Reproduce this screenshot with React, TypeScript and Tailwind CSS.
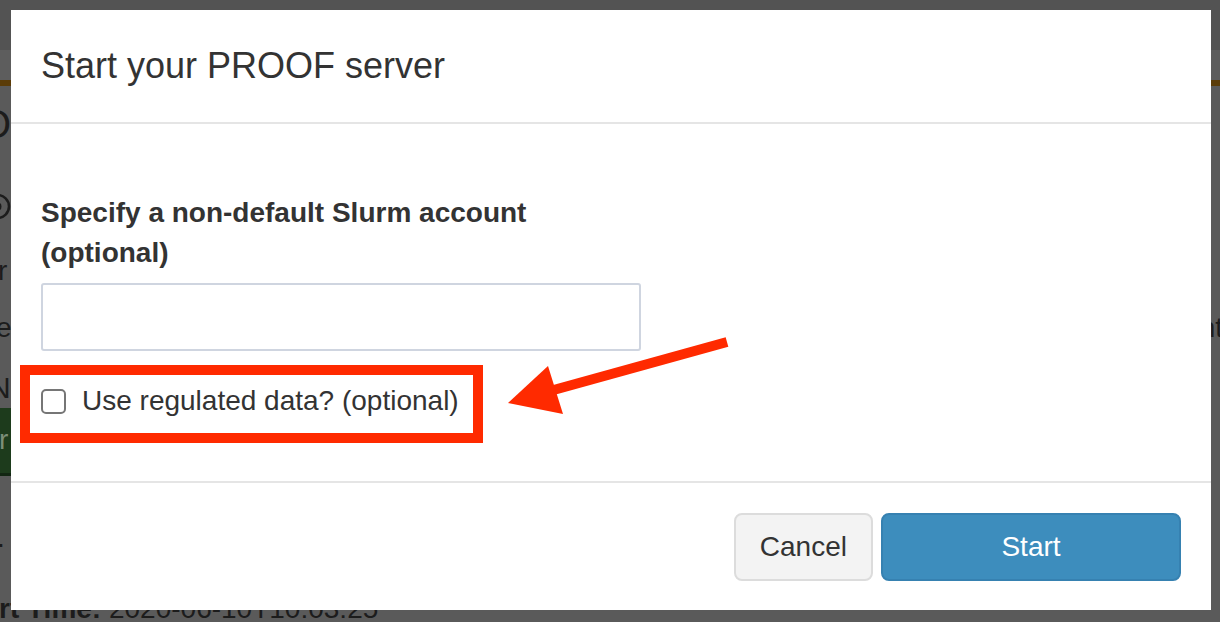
import React from "react"

// page behind the dialog, already dimmed by the backdrop
function BackgroundPage() {
    return (
        <div className="flex h-[622px] flex-col bg-[#5a5a5a] text-[#1c1c1c]">
            <div className="h-[50px] shrink-0 bg-[#535353]" />
            <div className="h-[30px] shrink-0 bg-[#5d5d5d]" />
            <div className="h-[6px] shrink-0 bg-[#5b3c08]" />

            <div className="mt-[15px] h-[46px] shrink-0 whitespace-nowrap text-[40px] leading-[46px]">
                <span className="-ml-[20px] inline-block">Open</span>
            </div>

            <div className="mt-[46px] h-[27px] shrink-0">
                <svg className="-ml-[16px]" width="27" height="27" viewBox="0 0 27 27">
                    <circle cx="13.5" cy="13.5" r="11.5" fill="none" stroke="#1c1c1c" strokeWidth="2.5" />
                    <circle cx="13.5" cy="13.5" r="4" fill="#1c1c1c" />
                </svg>
            </div>

            <div className="mt-[31px] h-[40px] shrink-0 whitespace-nowrap text-[28px] leading-[40px]">
                <span className="-ml-[2px] inline-block">r</span>
            </div>

            <div className="mt-[17px] flex h-[40px] shrink-0 justify-between whitespace-nowrap text-[28px] leading-[40px]">
                <span className="-ml-[4px] inline-block">e</span>
                <span className="-mr-[3px] inline-block">nt</span>
            </div>

            <div className="mt-[20px] h-[40px] shrink-0 whitespace-nowrap text-[30px] leading-[40px]">
                <span className="-ml-[11px] inline-block">N</span>
            </div>

            <div className="h-[68px] w-[60px] shrink-0 border-b-[3px] border-[#122612] bg-[#1d3b1c] pt-[12px] text-[28px] leading-[40px] text-[#7c8f79]">
                <span className="-ml-[1px] inline-block">r</span>
            </div>

            <div className="mt-[42px] h-[40px] shrink-0 whitespace-nowrap text-[28px] leading-[40px]">
                <span className="-ml-[3px] inline-block">.</span>
            </div>

            <div className="mt-[31px] h-[40px] shrink-0 whitespace-nowrap text-[28px] leading-[40px]">
                <span className="-ml-[1px] inline-block">
                    <b>rt Time:</b> 2020-06-10T10:03:25
                </span>
            </div>
        </div>
    )
}

function Modal() {
    return (
        <div className="w-[1200px] bg-white text-[#333]">
            <div className="h-[114px] border-b-2 border-[#e5e5e5] px-[30px] pt-[30px]">
                <h4 className="text-[36px] leading-[51px]">Start your PROOF server</h4>
            </div>

            <div className="px-[30px] pt-[69px] pb-[38px]">
                <label className="mb-[10px] block text-[28px] font-bold leading-[40px]">
                    Specify a non-default Slurm account
                    <br />
                    (optional)
                </label>
                <input
                    type="text"
                    className="block h-[68px] w-[600px] rounded-[3px] border-2 border-[#cfd5e0] bg-white px-[24px] text-[28px] outline-none"
                />

                <div className="-ml-[21px] mt-[14px] w-[463px] border-[10px] border-[#ff2a00] pt-[6px] pb-[12px] pl-[11px]">
                    <label className="flex h-[40px] items-center gap-[16px] whitespace-nowrap text-[28px] leading-[40px]">
                        <span className="h-[25px] w-[25px] shrink-0 rounded-[5px] border-2 border-[#767676] bg-white" />
                        Use regulated data? (optional)
                    </label>
                </div>
            </div>

            <div className="flex justify-end gap-[8px] border-t-2 border-[#e5e5e5] px-[30px] pt-[30px] pb-[29px]">
                <button className="h-[68px] rounded-[8px] border-2 border-[#dcdcdc] bg-[#f3f3f3] px-[24px] text-[28px] leading-[40px] text-[#333]">
                    Cancel
                </button>
                <button className="h-[68px] w-[300px] rounded-[8px] border-2 border-[#3681b1] bg-[#3d8dbd] text-[28px] leading-[40px] text-white">
                    Start
                </button>
            </div>
        </div>
    )
}

// red annotation arrow drawn over the dialog
function Arrow() {
    return (
        <svg
            className="pointer-events-none absolute inset-0"
            width="1220"
            height="622"
            viewBox="0 0 1220 622"
        >
            <line x1="727" y1="342" x2="550" y2="391" stroke="#ff2a00" strokeWidth="10" />
            <polygon points="508,403 548,366 563,414" fill="#ff2a00" />
        </svg>
    )
}

export default function App() {
    return (
        <div className="relative h-[622px] w-[1220px] overflow-hidden font-['Liberation_Sans',Arial,sans-serif]">
            <BackgroundPage />
            <div className="absolute inset-0 pl-[11px] pt-[10px]">
                <Modal />
            </div>
            <Arrow />
        </div>
    )
}
